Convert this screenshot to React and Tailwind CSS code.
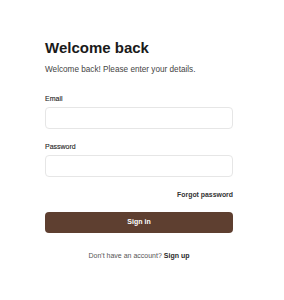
export default function App() {
  return (
    <div className="w-[284px] h-[300px] bg-white" style={{ fontFamily: "'Liberation Sans', Arial, sans-serif" }}>
      <div className="ml-[45px] w-[188px] pt-[39px] flex flex-col">
        <h1 className="text-[15px] leading-[18px] font-bold text-[#1a1a1a]">Welcome back</h1>
        <p className="mt-[8px] text-[8.2px] leading-[10px] text-[#444]">Welcome back! Please enter your details.</p>
        <label className="mt-[19px] text-[7px] leading-[10px] text-[#222] [-webkit-text-stroke:0.1px_#222]">Email</label>
        <input className="mt-[3px] h-[22px] rounded-[4px] border border-[#e6e6e6] outline-none" />
        <label className="mt-[13px] text-[7px] leading-[10px] text-[#222] [-webkit-text-stroke:0.1px_#222]">Password</label>
        <input type="password" className="mt-[3px] h-[22px] rounded-[4px] border border-[#e6e6e6] outline-none" />
        <div className="mt-[13px] flex justify-end">
          <span className="text-[6.9px] leading-[10px] font-bold text-[#333]">Forgot password</span>
        </div>
        <button className="mt-[12px] h-[21px] rounded-[4px] bg-[#5e3f30] text-white text-[7px] font-bold">Sign in</button>
        <p className="mt-[18px] text-center text-[7px] leading-[10px] text-[#555]">
          Don't have an account? <span className="font-bold text-[#2a2a2a]">Sign up</span>
        </p>
      </div>
    </div>
  );
}
